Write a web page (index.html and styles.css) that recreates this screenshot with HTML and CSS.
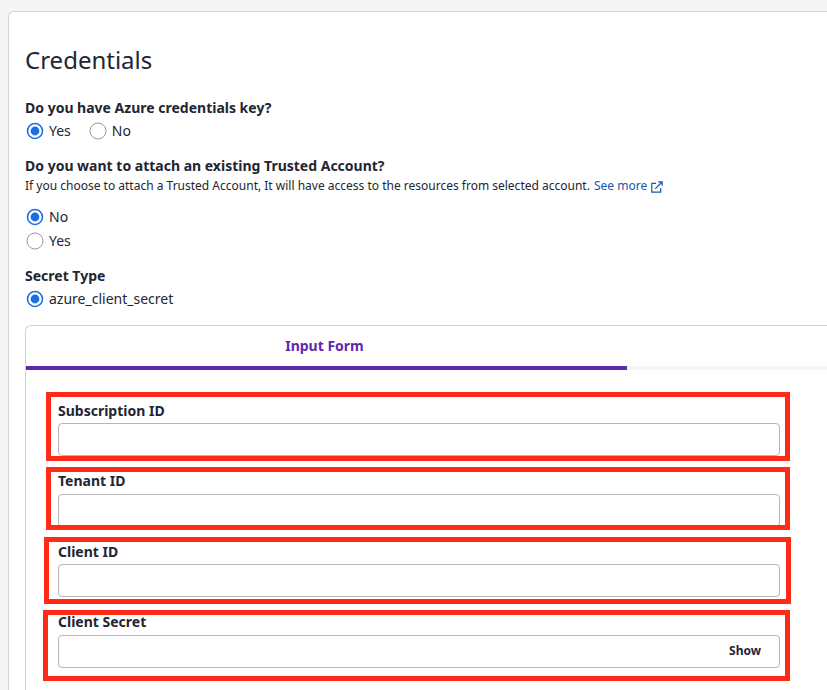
FILE: index.html
```html
<!DOCTYPE html>
<html lang="en">
<head>
<meta charset="utf-8">
<title>Credentials</title>
<link rel="stylesheet" href="styles.css">
</head>
<body>
<main class="card">
  <h1 class="title">Credentials</h1>

  <section class="group">
    <h2 class="label">Do you have Azure credentials key?</h2>
    <div class="options row">
      <div class="option"><svg class="radio checked" viewBox="0 0 18 18"><circle class="ring" cx="9" cy="9" r="7.5"/><circle class="dot" cx="9" cy="9" r="4.4"/></svg><span>Yes</span></div>
      <div class="option"><svg class="radio" viewBox="0 0 18 18"><circle class="ring" cx="9" cy="9" r="8"/></svg><span>No</span></div>
    </div>
  </section>

  <section class="group trusted">
    <h2 class="label">Do you want to attach an existing Trusted Account?</h2>
    <p class="hint">If you choose to attach a Trusted Account, It will have access to the resources from selected account. <a class="link">See more<svg class="external" viewBox="0 0 12 12" width="12" height="12"><path d="M5 2.3H.8v8.9h8.9V7M7.2.8h4V4.8M11 1 4.2 7.8" fill="none" stroke="currentColor" stroke-width="1.2"/></svg></a></p>
    <div class="options column">
      <div class="option"><svg class="radio checked" viewBox="0 0 18 18"><circle class="ring" cx="9" cy="9" r="7.5"/><circle class="dot" cx="9" cy="9" r="4.4"/></svg><span>No</span></div>
      <div class="option"><svg class="radio" viewBox="0 0 18 18"><circle class="ring" cx="9" cy="9" r="8"/></svg><span>Yes</span></div>
    </div>
  </section>

  <section class="group">
    <h2 class="label">Secret Type</h2>
    <div class="options row">
      <div class="option"><svg class="radio checked" viewBox="0 0 18 18"><circle class="ring" cx="9" cy="9" r="7.5"/><circle class="dot" cx="9" cy="9" r="4.4"/></svg><span>azure_client_secret</span></div>
    </div>
  </section>

  <section class="panel">
    <div class="tabs">
      <div class="tab active">Input Form</div>
      <div class="tab"></div>
    </div>
    <form class="form">
      <div class="field"><label>Subscription ID</label><div class="input"></div></div>
      <div class="field"><label>Tenant ID</label><div class="input"></div></div>
      <div class="field"><label>Client ID</label><div class="input"></div></div>
      <div class="field"><label>Client Secret</label><div class="input"><span class="show">Show</span></div></div>
    </form>
  </section>
</main>
<div class="mark mark-subscription"></div>
<div class="mark mark-tenant"></div>
<div class="mark mark-client"></div>
<div class="mark mark-secret"></div>
</body>
</html>
```

FILE: styles.css
```css
* { box-sizing: border-box; }

body {
  margin: 0;
  height: 690px;
  padding: 11px 0 0 8px;
  position: relative;
  background: #f5f5f5;
  color: #232533;
  font: 14px/20px "Noto Sans", sans-serif;
}

.card {
  display: flex;
  flex-direction: column;
  height: 679px;
  padding: 32px 0 0 16px;
  background: #fff;
  border: 1px solid #d3d3d5;
  border-width: 1px 0 0 1px;
  border-radius: 6px 0 0 0;
}

.title {
  margin: 0 0 22px;
  font-size: 24px;
  font-weight: 400;
  line-height: 32px;
}

.group { margin-bottom: 15px; }

.label {
  margin: 0;
  font-size: 14px;
  font-weight: 700;
  line-height: 20px;
}

.options { display: flex; margin-top: 3px; }
.options.row { gap: 17px; }
.options.column { flex-direction: column; gap: 4px; }

.trusted .options { margin-top: 11px; }

.option { display: flex; align-items: flex-start; height: 20px; }

.radio {
  width: 18px;
  height: 18px;
  margin: 1px 5px 0 1px;
}

.ring { fill: #fff; stroke: #9a9aa4; stroke-width: 1; }
.checked .ring { stroke: #1a6ee2; stroke-width: 1.6; }
.dot { fill: #1a6ee2; }

.hint {
  margin: 0;
  font-size: 12px;
  line-height: 20px;
  white-space: nowrap;
}

.link { margin-left: 1px; color: #1755b3; }
.external { margin-left: 4px; vertical-align: -3px; }

.panel {
  flex: 1;
  margin-top: 1px;
  border: 1px solid #d3d3d5;
  border-width: 1px 0 0 1px;
  border-radius: 6px 0 0 0;
}

.tabs { display: flex; }

.tab {
  flex: 1;
  height: 44px;
  padding: 10px 4px 0 0;
  border-bottom: 4px solid #f5f5f5;
  text-align: center;
}

.tab.active {
  flex: 0 0 601px;
  border-bottom-color: #6128ad;
  color: #6128ad;
  font-weight: 700;
}

.form {
  display: flex;
  flex-direction: column;
  gap: 14px;
  width: 754px;
  padding: 30px 0 0 32px;
}

.field label {
  display: block;
  margin-bottom: 1px;
  font-weight: 700;
  line-height: 22px;
}

.field:nth-child(even) label { margin-bottom: 2px; }

.input {
  display: flex;
  align-items: center;
  justify-content: flex-end;
  height: 33px;
  padding: 0 18px 1px 0;
  border: 1px solid #b5b5b7;
  border-radius: 4px;
}

.show { font-size: 12px; font-weight: 700; }

/* Annotation rectangles drawn over the form */
.mark { position: absolute; border: 5px solid #ff2b18; }
.mark-subscription { left: 46px; top: 392px; width: 744px; height: 69px; }
.mark-tenant { left: 46px; top: 467px; width: 744px; height: 63px; }
.mark-client { left: 44px; top: 537px; width: 747px; height: 67px; }
.mark-secret { left: 43px; top: 610px; width: 747px; height: 71px; }
```
